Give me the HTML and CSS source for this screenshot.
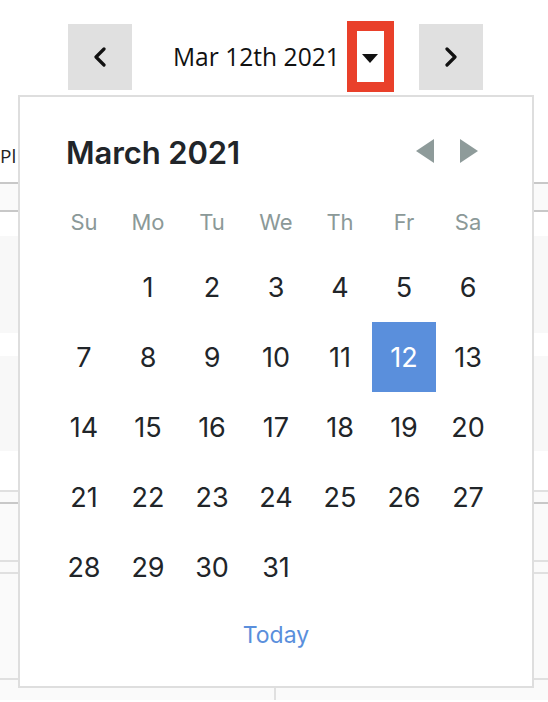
FILE: index.html
```html
<!DOCTYPE html>
<html>
<head>
<meta charset="utf-8">
<link rel="stylesheet" href="styles.css">
</head>
<body>
<div class="page">
  <div class="toolbar">
    <button class="nav-btn" aria-label="Previous day">
      <svg width="14" height="20" viewBox="0 0 14 20"><polyline points="11,2 3,10 11,18" fill="none" stroke="#111" stroke-width="3.2" stroke-linecap="round" stroke-linejoin="round"/></svg>
    </button>
    <span class="current-date">Mar 12th 2021</span>
    <span class="caret-box"><svg width="16" height="9" viewBox="0 0 16 9"><polygon points="0,0 16,0 8,9" fill="#111"/></svg></span>
    <button class="nav-btn next" aria-label="Next day">
      <svg width="14" height="20" viewBox="0 0 14 20"><polyline points="3,2 11,10 3,18" fill="none" stroke="#111" stroke-width="3.2" stroke-linecap="round" stroke-linejoin="round"/></svg>
    </button>
  </div>

  <div class="board">
    <div class="board-title"><span class="board-title-text">Pl</span></div>
    <div class="row head"></div>
    <div class="row gap-a"></div>
    <div class="row shade h97"></div>
    <div class="row gap-b"></div>
    <div class="row shade h95"></div>
    <div class="row gap-c"></div>
    <div class="row light-line"></div>
    <div class="row soft h10 dark-bottom"></div>
    <div class="row soft h56 light-bottom"></div>
    <div class="row soft h10 light-bottom"></div>
    <div class="row soft h104 light-bottom"></div>
    <div class="row soft foot"><div class="foot-col"></div></div>
  </div>

  <div class="datepicker">
    <div class="dp-title">
      <span class="dp-month">March 2021</span>
      <span class="dp-arrows">
        <svg width="18" height="24" viewBox="0 0 18 24"><polygon points="18,0 18,24 0,12" fill="#8e9b9a"/></svg>
        <svg width="18" height="24" viewBox="0 0 18 24"><polygon points="0,0 0,24 18,12" fill="#8e9b9a"/></svg>
      </span>
    </div>
    <div class="dp-grid">
      <div class="dow">Su</div><div class="dow">Mo</div><div class="dow">Tu</div><div class="dow">We</div><div class="dow">Th</div><div class="dow">Fr</div><div class="dow">Sa</div>
      <div class="day"></div><div class="day">1</div><div class="day">2</div><div class="day">3</div><div class="day">4</div><div class="day">5</div><div class="day">6</div>
      <div class="day">7</div><div class="day">8</div><div class="day">9</div><div class="day">10</div><div class="day">11</div><div class="day selected">12</div><div class="day">13</div>
      <div class="day">14</div><div class="day">15</div><div class="day">16</div><div class="day">17</div><div class="day">18</div><div class="day">19</div><div class="day">20</div>
      <div class="day">21</div><div class="day">22</div><div class="day">23</div><div class="day">24</div><div class="day">25</div><div class="day">26</div><div class="day">27</div>
      <div class="day">28</div><div class="day">29</div><div class="day">30</div><div class="day">31</div><div class="day"></div><div class="day"></div><div class="day"></div>
    </div>
    <div class="dp-footer"><span class="today">Today</span></div>
  </div>
</div>
</body>
</html>
```
FILE: styles.css
```css
* { box-sizing: border-box; }
html, body { margin: 0; padding: 0; background: #fff; }
body { width: 548px; height: 702px; overflow: hidden; }

.page { position: relative; width: 548px; height: 702px; }

.toolbar {
  display: flex;
  align-items: center;
  height: 96px;
  padding-left: 68px;
  padding-top: 21px;
  padding-bottom: 4px;
}
.nav-btn {
  width: 64px;
  height: 66px;
  border: 0;
  margin: 0;
  padding: 0;
  background: #e0e0e0;
  display: flex;
  align-items: center;
  justify-content: center;
}
.nav-btn.next { margin-left: 25px; }
.current-date {
  margin-left: 41px;
  font-family: "Open Sans", sans-serif;
  font-size: 24.6px;
  color: #111;
  line-height: 1;
  padding-top: 2px;
}
.caret-box {
  margin-left: 7px;
  width: 47px;
  height: 71px;
  border: 10px solid #e9402a;
  display: flex;
  align-items: center;
  justify-content: center;
  padding-top: 4px;
}

.board { display: flex; flex-direction: column; }
.board-title {
  height: 88px;
  padding-top: 48px;
  border-bottom: 2px solid #c8c8c8;
}
.board-title-text {
  display: block;
  width: 18px;
  white-space: nowrap;
  font-family: "Open Sans", sans-serif;
  font-size: 19px;
  line-height: 24px;
  color: #222;
}
.row { width: 100%; }
.row.head { height: 28px; background: #fafafa; border-bottom: 2px solid #c8c8c8; }
.row.gap-a { height: 24px; }
.row.shade { background: #f8f8f8; }
.h97 { height: 97px; }
.h95 { height: 95px; }
.row.gap-b { height: 23px; }
.row.gap-c { height: 39px; }
.row.light-line { height: 2px; background: #e0e0e0; }
.row.soft { background: #fafafa; }
.h10 { height: 12px; }
.h56 { height: 58px; }
.h104 { height: 106px; }
.dark-bottom { border-bottom: 2px solid #c8c8c8; }
.light-bottom { border-bottom: 2px solid #e0e0e0; }
.row.foot { height: 20px; display: flex; }
.foot-col { width: 276px; border-right: 2px solid #e0e0e0; }

.datepicker {
  position: absolute;
  left: 18px;
  top: 95px;
  width: 516px;
  height: 593px;
  background: #fff;
  border: 2px solid #dedede;
  padding: 25px 32px 0 32px;
  font-family: Inter, "Liberation Sans", sans-serif;
}
.dp-title {
  height: 60px;
  display: flex;
  align-items: center;
  justify-content: space-between;
  padding-left: 14px;
  padding-right: 22px;
}
.dp-month {
  font-size: 31px;
  font-weight: 600;
  color: #212529;
  letter-spacing: -0.1px;
}
.dp-arrows { display: flex; gap: 26px; margin-top: -2px; }
.dp-grid {
  margin-top: 10px;
  display: grid;
  grid-template-columns: repeat(7, 64px);
  grid-template-rows: 60px repeat(5, 70px);
}
.dow {
  display: flex;
  align-items: center;
  justify-content: center;
  font-size: 22px;
  color: #8b9998;
}
.day {
  display: flex;
  align-items: center;
  justify-content: center;
  font-size: 27px;
  color: #212529;
}
.day.selected { background: #5a8fdc; color: #fff; }
.dp-footer {
  margin-top: 8px;
  height: 50px;
  display: flex;
  align-items: center;
  justify-content: center;
}
.today { font-size: 23px; color: #5a8fdc; }
```
